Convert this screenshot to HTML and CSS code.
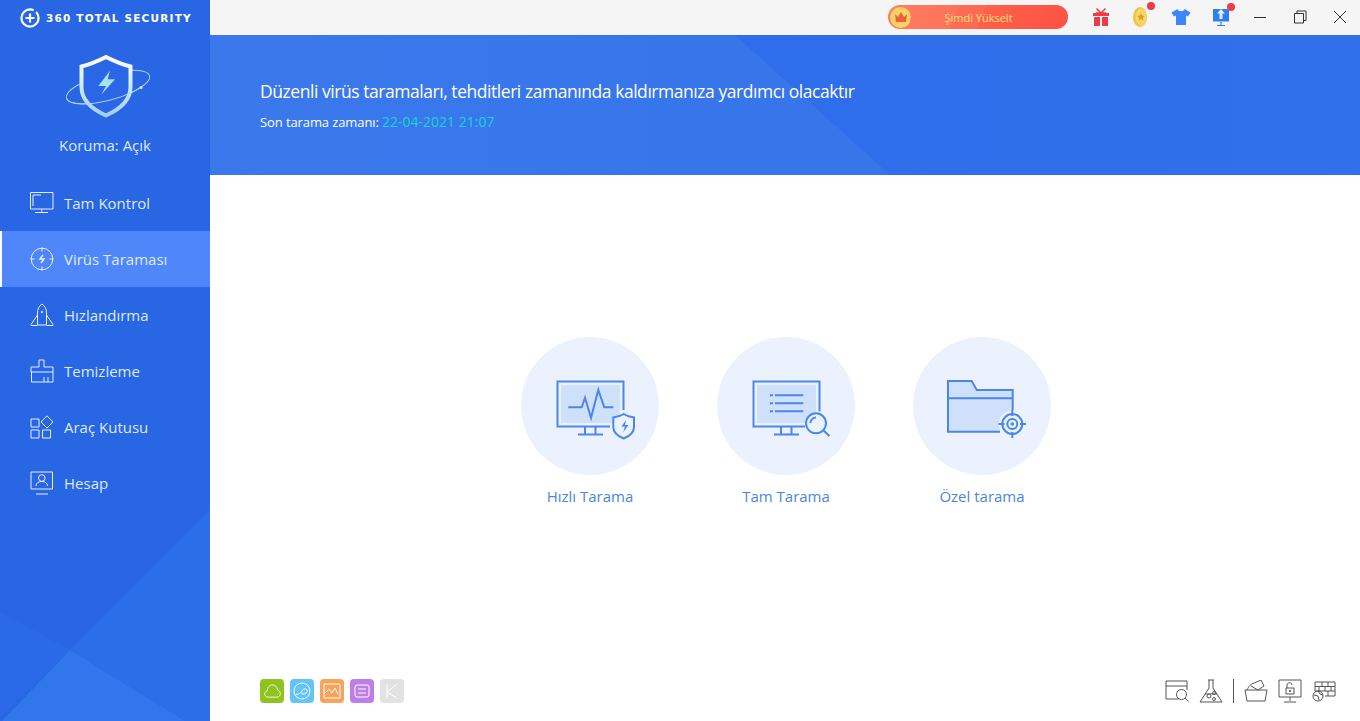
FILE: index.html
```html
<!DOCTYPE html>
<html lang="tr">
<head>
    <meta charset="UTF-8">
    <title>360 Total Security</title>
    <link rel="stylesheet" href="styles.css">
</head>
<body>
<div class="app">
    <aside class="sidebar">
        <svg class="side-deco" width="210" height="221" viewBox="0 0 210 221">
            <polygon points="210,10 70,150 185,221 210,221" fill="#2c6ee7"/>
            <polygon points="0,112 70,150 0,217" fill="#2a6ae7"/>
            <polygon points="70,150 185,221 2,221" fill="#3176ec"/>
        </svg>
        <div class="brand">
            <svg width="20" height="20" viewBox="0 0 20 20"><circle cx="10" cy="10" r="8.600" fill="none" stroke="#fff" stroke-width="2.200" stroke-dasharray="44 3"/><path d="M10 5.500v9M5.500 10h9" stroke="#fff" stroke-width="2.200"/></svg>
            <span class="brand-name">360 TOTAL SECURITY</span>
        </div>
        <div class="status">
            <svg width="92" height="66" viewBox="0 0 92 66">
                <defs>
                    <linearGradient id="shieldEdge" x1="0" y1="0" x2="0" y2="1">
                        <stop offset="0" stop-color="#ffffff"/>
                        <stop offset="1" stop-color="#9fd2fb"/>
                    </linearGradient>
                </defs>
                <ellipse cx="48" cy="33" rx="43" ry="13" transform="rotate(-15 48 33)" fill="none" stroke="#a9d4fb" stroke-width="1"/>
                <path d="M46 3c8 4 16 7.500 24.500 9.500V33c0 13-10 22-24.500 28.500C31.500 55 21.500 46 21.500 33V12.500C30 10.500 38 7 46 3z" fill="#2a66e6" stroke="url(#shieldEdge)" stroke-width="4"/>
                <path d="M6.500 44A43 13 -15 0 0 81 33.500" fill="none" stroke="#a9d4fb" stroke-width="1"/>
                <circle cx="81" cy="33.500" r="1.600" fill="#cfe9ff"/>
                <path d="M50 16.700L38.300 32H46l-5 9 14-15.700h-7.300z" fill="#a8e0ff"/>
            </svg>
            <div class="status-text">Koruma: Açık</div>
        </div>
        <nav class="nav">
            <a class="nav-item">
                <svg width="24" height="24" viewBox="0 0 24 24"><path d="M.5 1.500h22.500v16.500H.5zM3 15V4h8M11.800 18v3M5 21.500h13"/></svg>
                <span>Tam Kontrol</span>
            </a>
            <a class="nav-item active">
                <svg width="24" height="24" viewBox="0 0 24 24"><circle cx="12" cy="12" r="10.800"/><path d="M12 .5v4M12 19.500v4M.5 12h4M19.500 12h4"/><path d="M13 8l-3 4h4l-3 4" stroke-width="1.400"/></svg>
                <span>Virüs Taraması</span>
            </a>
            <a class="nav-item">
                <svg width="24" height="24" viewBox="0 0 24 24"><path d="M12 1c-3 2-4.500 5-4.500 9v12h9V10c0-4-1.500-7-4.500-9zM7.500 12L1 21.500v1h6.500M16.500 12l6.500 9.500v1h-6.500"/><circle cx="12" cy="9" r=".8"/></svg>
                <span>Hızlandırma</span>
            </a>
            <a class="nav-item">
                <svg width="24" height="24" viewBox="0 0 24 24"><path d="M9 1h5v7h9v5H1V8h8zM1.500 13v10h21.500V13M14 23v-5M18 23v-5"/></svg>
                <span>Temizleme</span>
            </a>
            <a class="nav-item">
                <svg width="24" height="24" viewBox="0 0 24 24"><path d="M1 4h8v8H1zM1 15h8v8H1zM12.500 15h8v8h-8zM17 .8L23 7l-6 6-6-6z"/></svg>
                <span>Araç Kutusu</span>
            </a>
            <a class="nav-item">
                <svg width="24" height="24" viewBox="0 0 24 24"><path d="M1 1h21.500v17H1zM6 23h12M6 15c0-3 2.500-4.500 5.800-4.500s5.700 1.500 5.700 4.500"/><circle cx="11.800" cy="7" r="3.300"/></svg>
                <span>Hesap</span>
            </a>
        </nav>
    </aside>

    <main class="main">
        <header class="titlebar">
            <div class="upgrade">
                <span class="crown">
                    <svg width="14" height="12" viewBox="0 0 14 12"><path d="M1 3l3 3 3-5 3 5 3-3-1 8H2z" fill="#e8603c"/></svg>
                </span>
                <span class="upgrade-text">Şimdi Yükselt</span>
            </div>
            <div class="title-icons">
                <svg width="20" height="20" viewBox="0 0 20 20"><path d="M2 6h16v3H2zM3 10h6v9H3zM11 10h6v9h-6z" fill="#ee3b47"/><path d="M10 6L5.500 1.500M10 6l4.500-4.500M10 6H5M10 6h5" stroke="#ee3b47" stroke-width="1.500" fill="none"/></svg>
                <span class="t-wrap">
                    <svg width="18" height="22" viewBox="0 0 18 22"><ellipse cx="8" cy="11" rx="7" ry="10" fill="#f2c33d"/><ellipse cx="9" cy="11" rx="5.500" ry="8.500" fill="#f7d768"/><path d="M9 7l1.200 2.600 2.500.3-1.900 1.800.5 2.700-2.300-1.300-2.300 1.300.5-2.700-1.900-1.800 2.500-.3z" fill="#e39a2a"/></svg>
                    <i class="dot"></i>
                </span>
                <svg width="20" height="18" viewBox="0 0 20 18"><path d="M6.500 1L.5 4.500l2.500 4 2-1V17h10V7.500l2 1 2.500-4-6-3.500c-.5 3-6.500 3-7 0z" fill="#3b86fb"/></svg>
                <span class="t-wrap">
                    <svg width="18" height="20" viewBox="0 0 18 20"><path d="M1 2h16v12.500H1z" fill="#2f80ee"/><path d="M9 2l4 4.500h-2.500V12h-3V6.500H5z" fill="#dff0ff"/><path d="M9 14.500V18M5 18.500h8" stroke="#2f80ee" stroke-width="1.200"/></svg>
                    <i class="dot"></i>
                </span>
            </div>
            <div class="win-btns">
                <svg width="14" height="14" viewBox="0 0 14 14"><path d="M1 7.500h12"/></svg>
                <svg width="14" height="14" viewBox="0 0 14 14"><path d="M1.500 3.500h9v9.500h-9zM4 3.500V1h9v9.500h-2.500"/></svg>
                <svg width="14" height="14" viewBox="0 0 14 14"><path d="M1 1l12 12M13 1L1 13"/></svg>
            </div>
        </header>

        <section class="banner">
            <h1 class="banner-title">Düzenli virüs taramaları, tehditleri zamanında kaldırmanıza yardımcı olacaktır</h1>
            <p class="banner-sub">Son tarama zamanı: <span class="last-date">22-04-2021 21:07</span></p>
        </section>

        <section class="content">
            <div class="scan-row">
                <div class="scan">
                    <div class="scan-circle">
                        <svg width="80" height="60" viewBox="0 0 80 60">
                            <path d="M5 5h59v38H5z" fill="#cfe0fb"/>
                            <path d="M67.500 30V1.500h-66v45H54M29 46.500v8M39.500 46.500v8M22 54.500h25" class="ln"/>
                            <path d="M12.300 27.300h13.400l3.300-9.600 6 20 7.300-27.700 6 17.300h9" class="ln"/>
                            <path d="M67.700 34c3 2 6.500 3 10.300 3.500V47c0 5-4 9-10.300 11.500C61.400 56 57.300 52 57.300 47v-9.500c3.900-.5 7.400-1.500 10.400-3.500z" class="ln" fill="#eaf2fe"/>
                            <path d="M70 40l-4.500 6.500h3.500l-2 6 5.500-7.500h-3.500z" fill="#4a86ec"/>
                        </svg>
                    </div>
                    <div class="scan-label">Hızlı Tarama</div>
                </div>
                <div class="scan">
                    <div class="scan-circle">
                        <svg width="80" height="60" viewBox="0 0 80 60">
                            <path d="M5 5h59v38H5z" fill="#cfe0fb"/>
                            <path d="M67.500 31.500V1.500h-66v45H53M29 46.500v8M39.500 46.500v8M22 54.500h25" class="ln"/>
                            <path d="M18 15.300h3M23 15.300h28.300M18 23.300h3M23 23.300h28.300M18 31.300h3M23 31.300h28.300" class="ln"/>
                            <circle cx="64" cy="43.300" r="10" class="ln" fill="#eaf2fe"/>
                            <path d="M58.500 43c0-3 2.500-5.500 5.500-5.500M71.500 50.500l6 5.500" class="ln"/>
                        </svg>
                    </div>
                    <div class="scan-label">Tam Tarama</div>
                </div>
                <div class="scan">
                    <div class="scan-circle">
                        <svg width="80" height="60" viewBox="0 0 80 60">
                            <path d="M1 2h22l5 9h36v40H1z" fill="#cfe0fb"/>
                            <path d="M64.700 30V10H28.700L23.700 1H0v50.700h52M0 18.300h64.700" class="ln"/>
                            <circle cx="64.300" cy="44" r="13.500" fill="#eef4fe"/>
                            <circle cx="64.300" cy="44" r="10" class="ln" fill="#eaf2fe"/>
                            <circle cx="64.300" cy="44" r="5" class="ln"/>
                            <circle cx="64.300" cy="44" r="1.800" fill="#4a86ec"/>
                            <path d="M64.300 30v6M64.300 52v6M50.500 44h6M72 44h6" class="ln"/>
                        </svg>
                    </div>
                    <div class="scan-label">Özel tarama</div>
                </div>
            </div>
        </section>

        <footer class="bottom">
            <div class="apps">
                <span class="app-tile green"><svg width="19" height="14" viewBox="0 0 20 16"><path d="M5 15c-5 0-5-6-1-7 0-4 3-7 6-7 3 0 5 2 6 6 4 1 4 8-1 8z"/></svg></span>
                <span class="app-tile sky"><svg width="18" height="18" viewBox="0 0 18 18"><circle cx="9" cy="9" r="8"/><path d="M3 12c2 1 5-1 6-3s4-3 5-1-1 4-3 4-3-1-3-2"/></svg></span>
                <span class="app-tile orange"><svg width="18" height="16" viewBox="0 0 18 16"><path d="M1 1h16v14H1zM1 11l5-5 3 4 3-5 3 6"/></svg></span>
                <span class="app-tile purple"><svg width="16" height="14" viewBox="0 0 16 14"><rect x="1" y="1" width="14" height="12" rx="2"/><path d="M4 5h8M4 9h8"/></svg></span>
                <span class="app-tile grey"><svg width="14" height="16" viewBox="0 0 14 16"><path d="M2 1v14M12 1L2 9l10 6"/></svg></span>
            </div>
            <div class="tools">
                <svg width="24" height="22" viewBox="0 0 24 22"><path d="M14 19H1V1h21v9M1 6h21"/><circle cx="16.500" cy="14.500" r="5"/><path d="M20 18l3.500 3.500"/></svg>
                <svg width="24" height="24" viewBox="0 0 24 24"><path d="M9 1h6M10 1v8L1 23h22L14 9V1M6 15h12"/><circle cx="10" cy="17" r="2"/><circle cx="15" cy="14" r="1.500"/><circle cx="15" cy="20" r="1.500"/></svg>
                <i class="tool-sep"></i>
                <svg width="24" height="22" viewBox="0 0 24 22"><path d="M1 10h22l-2 11H3zM3 10c2-4 3-5 5-6l9-4 3 6-6 4M7 6l7 4"/></svg>
                <svg width="24" height="24" viewBox="0 0 24 24"><path d="M1 1h22v17H1zM12 18v4M6 23h12M8 9h8v6H8zM9 9V6c0-3 5-3 5 0"/><circle cx="12" cy="12" r=".8"/></svg>
                <svg width="24" height="22" viewBox="0 0 24 22"><path d="M3 11V2h20v14H13M3 6.500h20M3 11h20M10 2v4.500M16 2v4.500M7 6.500V11M13 6.500V11M19 6.500V11M16 11v5"/><circle cx="6" cy="16" r="5"/><path d="M2 15l4 1 1 4M6 11l2 3 3 1"/></svg>
            </div>
        </footer>
    </main>
</div>
</body>
</html>
```

FILE: styles.css
```css
* {
    box-sizing: border-box;
}
html, body {
    margin: 0;
    height: 100%;
    overflow: hidden;
}
body {
    font-family: "Open Sans", "Noto Sans", Arial, sans-serif;
    background: #fff;
}
.app {
    display: flex;
    height: 721px;
}

/* sidebar */
.sidebar {
    position: relative;
    width: 210px;
    flex: none;
    background: #2866e4;
    color: #dcebff;
    overflow: hidden;
}
.side-deco {
    position: absolute;
    left: 0;
    bottom: 0;
}
.brand {
    position: relative;
    display: flex;
    align-items: center;
    gap: 6px;
    height: 35px;
    padding-left: 20px;
}
.brand-name {
    color: #fff;
    font-family: "DejaVu Sans", sans-serif;
    font-size: 10.500px;
    font-weight: 700;
    letter-spacing: 1.200px;
    white-space: nowrap;
}
.status {
    position: relative;
    display: flex;
    flex-direction: column;
    align-items: center;
    height: 140px;
    padding-top: 19px;
    padding-left: 2px;
}
.status-text {
    margin-top: 14px;
    margin-left: -2px;
    font-size: 15px;
    line-height: 22px;
}
.nav {
    position: relative;
}
.nav-item {
    display: flex;
    align-items: center;
    gap: 10px;
    height: 56px;
    padding-left: 30px;
    font-size: 15px;
    color: #dcebff;
}
.nav-item svg {
    fill: none;
    stroke: #e4f0ff;
    stroke-width: 1;
}
.nav-item.active {
    background: #4f87fb;
    border-left: 2px solid #fff;
    padding-left: 28px;
}

/* top */
.main {
    flex: 1;
    display: flex;
    flex-direction: column;
    min-width: 0;
}
.titlebar {
    display: flex;
    align-items: center;
    height: 35px;
    flex: none;
    background: #f5f5f5;
    padding: 0 0 1px 678px;
}
.upgrade {
    display: flex;
    align-items: center;
    width: 180px;
    height: 24px;
    border-radius: 12px;
    background: linear-gradient(115deg, #ff7d60 0%, #ff7259 38%, #ff6a52 38%, #ff6a52 52%, #ff6048 52%, #fd5245 100%);
    padding-left: 2px;
}
.crown {
    display: flex;
    align-items: center;
    justify-content: center;
    width: 21px;
    height: 21px;
    border-radius: 50%;
    background: #fbd266;
}
.upgrade-text {
    flex: 1;
    text-align: center;
    padding-right: 22px;
    font-size: 11px;
    color: #ffe27d;
}
.title-icons {
    display: flex;
    align-items: center;
    gap: 21px;
    margin-left: 23px;
}
.t-wrap {
    position: relative;
    display: flex;
}
.dot {
    position: absolute;
    top: -4px;
    right: -5px;
    width: 8px;
    height: 8px;
    border-radius: 50%;
    background: #ee3b47;
}
.win-btns {
    display: flex;
    align-items: center;
    gap: 26px;
    margin-left: 23px;
}
.win-btns svg {
    fill: none;
    stroke: #333;
    stroke-width: 1;
}
.banner {
    position: relative;
    height: 140px;
    flex: none;
    background: linear-gradient(90deg, #3a78ec 0%, #3775eb 50%, #3473ea 100%);
    padding: 44px 0 0 50px;
    color: #fff;
}
.banner::before {
    content: "";
    position: absolute;
    inset: 0;
    background: linear-gradient(90deg, #2f6eea 50%, #3070ea 100%);
    clip-path: polygon(525px 0, 100% 0, 100% 100%, 680px 100%);
}
.banner-title, .banner-sub {
    position: relative;
}
.banner-title {
    margin: 0;
    font-size: 17.500px;
    font-weight: 400;
    letter-spacing: -.45px;
    line-height: 24px;
}
.banner-sub {
    margin: 10px 0 0;
    font-size: 13px;
    letter-spacing: -.1px;
    line-height: 18px;
}
.last-date {
    color: #18d6d0;
    font-size: 14px;
    letter-spacing: 0;
}

/* scan buttons */
.content {
    flex: 1;
    display: flex;
    justify-content: center;
    padding: 162px 0 0 2px;
}
.scan-row {
    display: flex;
    gap: 58px;
}
.scan {
    display: flex;
    flex-direction: column;
    align-items: center;
    width: 138px;
}
.scan-circle {
    display: flex;
    align-items: center;
    justify-content: center;
    width: 138px;
    height: 138px;
    padding: 8px 0 0 12px;
    border-radius: 50%;
    background: #ebf2fe;
}
.scan-circle svg {
    fill: none;
    flex: none;
    overflow: visible;
}
.ln {
    stroke: #4a86ec;
    stroke-width: 2;
}
.scan-label {
    margin-top: 11px;
    font-size: 15px;
    line-height: 20px;
    color: #4a86e0;
}

/* bottom bar */
.bottom {
    display: flex;
    justify-content: space-between;
    align-items: center;
    height: 60px;
    flex: none;
    padding: 0 24px 0 50px;
}
.apps {
    display: flex;
    gap: 6px;
}
.app-tile {
    display: flex;
    align-items: center;
    justify-content: center;
    width: 24px;
    height: 24px;
    border-radius: 4px;
}
.app-tile svg {
    fill: none;
    stroke: #fff;
    stroke-width: 1;
}
.green { background: #8fc31f; }
.sky { background: #62c4f8; }
.orange { background: #f7a35c; }
.purple { background: #bd7ee8; }
.grey { background: #e2e2e2; }
.tools {
    display: flex;
    align-items: center;
    gap: 10px;
}
.tools svg {
    fill: none;
    stroke: #555;
    stroke-width: 1;
}
.tool-sep {
    width: 1px;
    height: 24px;
    background: #555;
}
```
